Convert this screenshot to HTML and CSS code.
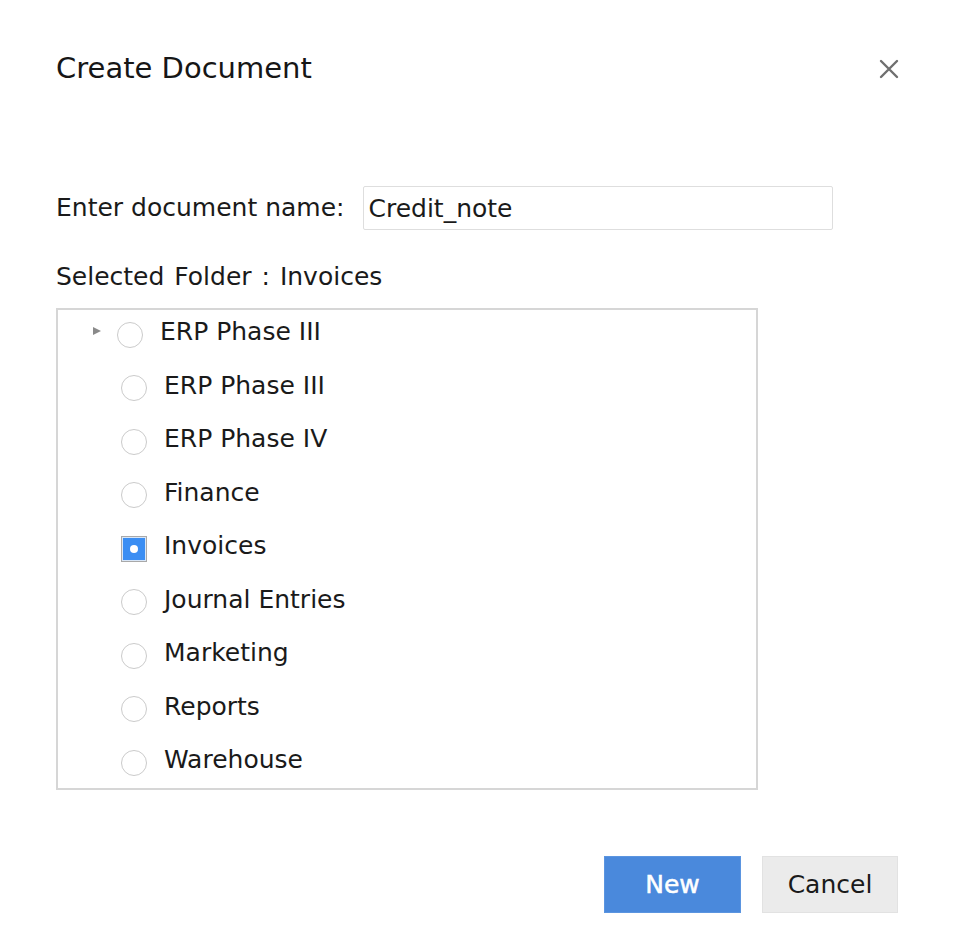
FILE: index.html
```html
<!DOCTYPE html>
<html lang="en">
<head>
<meta charset="utf-8">
<title>Create Document</title>
<link rel="stylesheet" href="styles.css">
</head>
<body>
<div class="dialog">
  <div class="header">
    <h1 class="title">Create Document</h1>
    <button class="close" aria-label="Close">
      <svg width="20" height="20" viewBox="0 0 20 20"><path d="M2 2 L18 18 M18 2 L2 18" stroke="#6f6f6f" stroke-width="2.4" stroke-linecap="round"/></svg>
    </button>
  </div>

  <div class="name-row">
    <label class="label" for="docname">Enter document name:</label>
    <input id="docname" class="name-input" type="text" value="Credit_note">
  </div>

  <div class="selected">Selected Folder : Invoices</div>

  <div class="tree">
    <div class="row row-parent"><span class="arrow"></span><span class="radio"></span><span class="text">ERP Phase III</span></div>
    <div class="row"><span class="radio"></span><span class="text">ERP Phase III</span></div>
    <div class="row"><span class="radio"></span><span class="text">ERP Phase IV</span></div>
    <div class="row"><span class="radio"></span><span class="text">Finance</span></div>
    <div class="row"><span class="radio checked"><span class="dot"></span></span><span class="text">Invoices</span></div>
    <div class="row"><span class="radio"></span><span class="text">Journal Entries</span></div>
    <div class="row"><span class="radio"></span><span class="text">Marketing</span></div>
    <div class="row"><span class="radio"></span><span class="text">Reports</span></div>
    <div class="row"><span class="radio"></span><span class="text">Warehouse</span></div>
  </div>

  <div class="actions">
    <button class="btn btn-primary">New</button>
    <button class="btn btn-secondary">Cancel</button>
  </div>
</div>
</body>
</html>
```

FILE: styles.css
```css
* { box-sizing: border-box; }

html, body {
  margin: 0;
  padding: 0;
  background: #ffffff;
}

body {
  font-family: "DejaVu Sans", Verdana, sans-serif;
  color: #1a1a1a;
  font-size: 25px;
}

.dialog {
  width: 954px;
  padding: 48px 55px 0 56px;
}

.header {
  display: flex;
  justify-content: space-between;
  align-items: center;
  height: 40px;
}

.title {
  margin: 0;
  font-size: 29px;
  font-weight: normal;
  line-height: 40px;
  color: #161616;
}

.close {
  border: 0;
  background: transparent;
  padding: 0;
  width: 20px;
  height: 20px;
  display: flex;
  margin-top: 2px;
}

.name-row {
  display: flex;
  align-items: center;
  margin-top: 98px;
}

.label {
  line-height: 30px;
  margin-right: 19px;
}

.name-input {
  width: 470px;
  height: 44px;
  border: 1.5px solid #dedede;
  border-radius: 2px;
  padding: 0 4px;
  font-family: "DejaVu Sans", Verdana, sans-serif;
  font-size: 25px;
  color: #1a1a1a;
  outline: none;
}

.selected {
  margin-top: 32px;
  line-height: 30px;
  word-spacing: 2px;
}

.tree {
  margin-top: 16px;
  width: 702px;
  height: 482px;
  overflow: hidden;
  border: 2px solid #d6d6d6;
  display: flex;
  flex-direction: column;
}

.row {
  height: 53.5px;
  flex: none;
  display: flex;
  align-items: flex-start;
  padding-left: 63px;
}

.row-parent {
  padding-left: 35px;
}

.arrow {
  width: 0;
  height: 0;
  border-top: 4.5px solid transparent;
  border-bottom: 4.5px solid transparent;
  border-left: 8px solid #8a8a8a;
  margin-right: 16px;
  margin-top: 17px;
}

.radio {
  width: 26px;
  height: 26px;
  border-radius: 50%;
  border: 1.5px solid #cbcbcb;
  background: #fff;
  flex: none;
  margin-top: 11.5px;
  display: flex;
  align-items: center;
  justify-content: center;
}

.radio.checked {
  border-radius: 0;
  border: 1px solid #a9a9a9;
  background: #3b8ef3;
  box-shadow: inset 0 0 0 1px #d8e6f7;
}

.dot {
  width: 8px;
  height: 8px;
  border-radius: 50%;
  background: #ffffff;
}

.text {
  margin-left: 17px;
  margin-top: 7px;
  line-height: 30px;
}

.actions {
  display: flex;
  justify-content: flex-end;
  gap: 21px;
  margin-top: 66px;
  padding-right: 1px;
}

.btn {
  height: 57px;
  width: 137px;
  font-family: "DejaVu Sans", Verdana, sans-serif;
  font-size: 25px;
  border-radius: 0;
  cursor: pointer;
}

.btn-primary {
  background: #4a89dc;
  border: 1px solid #5b95e0;
  color: #ffffff;
  font-weight: normal;
  -webkit-text-stroke: 0.5px #ffffff;
}

.btn-secondary {
  width: 136px;
  background: #ebebeb;
  border: 1px solid #e2e2e2;
  color: #1a1a1a;
}
```
